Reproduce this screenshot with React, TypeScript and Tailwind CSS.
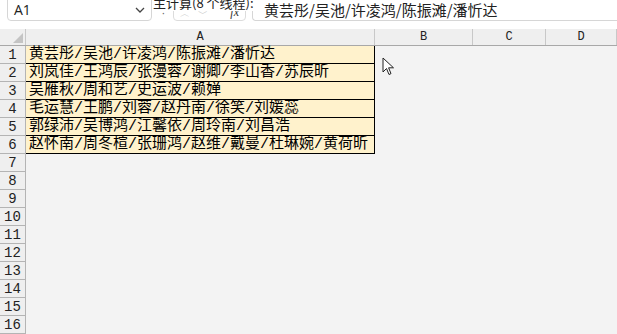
import React from "react";

const rows = [
  "黄芸彤/吴池/许凌鸿/陈振滩/潘忻达",
  "刘岚佳/王鸿辰/张漫蓉/谢卿/李山香/苏辰昕",
  "吴雁秋/周和艺/史运波/赖婵",
  "毛运慧/王鹏/刘蓉/赵丹南/徐笑/刘媛蕊",
  "郭绿沛/吴博鸿/江馨依/周玲南/刘昌浩",
  "赵怀南/周冬楦/张珊鸿/赵维/戴曼/杜琳婉/黄荷昕",
];

const cols = [
  { name: "A", w: "w-[349px]" },
  { name: "B", w: "w-[98px]" },
  { name: "C", w: "w-[73px]" },
  { name: "D", w: "w-[71px]" },
];

const mono = "font-['Liberation_Mono',monospace]";
const cjk = "font-['Liberation_Mono','Noto_Sans_CJK_SC',sans-serif]";

const App = () => {
  const numbers = Array.from({ length: 16 }, (_, i) => i + 1);

  return (
    <div className="relative w-[617px] h-[334px] overflow-hidden bg-[#f3f3f3]">
      {/* formula bar */}
      <div className="relative h-[29px] bg-white flex items-start">
        <div className="ml-[7px] -mt-[4px] w-[145px] h-[25px] border border-[#d6d6d6] rounded-[4px] flex items-end justify-between pb-[3px] px-[6px]">
          <span className="font-['Open_Sans',sans-serif] text-[14px] leading-none text-[#222]">A1</span>
          <svg width="10" height="7" viewBox="0 0 10 7" className="mb-[3px]">
            <path d="M1 1 L5 5 L9 1" stroke="#444" strokeWidth="1.3" fill="none" />
          </svg>
        </div>
        <div className="relative w-[100px] h-[22px]">
          <div className="absolute left-[21px] -top-[4px] w-[73px] h-[25px] border border-[#dcdcdc] rounded-[4px] flex items-end pb-[2px] px-[6px] gap-[8px]">
            <span className="text-[#c8c8c8] text-[10px] leading-none">︿</span>
            <span className="text-[#c8c8c8] text-[10px] leading-none">﹀</span>
            <span className="ml-auto font-['Liberation_Serif',serif] italic text-[12px] leading-none text-[#333]">fx</span>
          </div>
          <div className="absolute left-[1px] -top-[5px] bg-white pr-[2px] font-['Noto_Sans_CJK_SC',sans-serif] text-[13px] leading-[16px] text-[#222] whitespace-nowrap">
            主计算(8 个线程):
          </div>
          <span className="absolute left-[10px] top-[8px] text-[10px] leading-none text-[#666]">·</span>
        </div>
        <div className="-mt-[4px] flex-1 h-[25px] border border-[#d6d6d6] rounded-l-[4px] border-r-0 flex items-end pb-[3px] pl-[11px]">
          <span className="font-['Noto_Sans_CJK_SC',sans-serif] text-[15px] leading-none text-[#222] whitespace-nowrap">
            {rows[0]}
          </span>
        </div>
      </div>

      {/* column headers */}
      <div className="flex h-[17px] bg-[#efefef] border-b border-[#a8a8a8]">
        <div className="relative w-[26px] border-r border-[#c8c8c8]">
          <svg width="10" height="10" viewBox="0 0 10 10" className="absolute right-[2px] bottom-[2px]">
            <polygon points="10,0 10,10 0,10" fill="#c4c4c4" />
          </svg>
        </div>
        {cols.map((c) => (
          <div
            key={c.name}
            className={`${c.w} border-r border-[#c8c8c8] flex items-center justify-center ${mono} text-[12px] leading-none text-[#222]`}
          >
            {c.name}
          </div>
        ))}
      </div>

      {/* rows */}
      <div className="flex flex-col">
        {numbers.map((n) => (
          <div key={n} className="flex h-[18px]">
            <div
              className={`w-[26px] border-r border-b border-[#b4b4b4] bg-[#efefef] flex items-center justify-center ${mono} text-[14px] leading-none text-[#222]`}
            >
              {n}
            </div>
            {n <= 6 ? (
              <div
                className={`w-[349px] bg-[#fff2cc] border-b border-r border-black flex items-center pl-[3px] ${cjk} text-[15px] leading-none text-black whitespace-nowrap overflow-visible`}
              >
                {rows[n - 1]}
              </div>
            ) : null}
          </div>
        ))}
      </div>

      {/* mouse pointer */}
      <svg
        width="13"
        height="20"
        viewBox="0 0 13 20"
        className="absolute left-[382px] top-[57px]"
      >
        <path
          d="M1 1 L1 15 L4.5 11.5 L7 17.5 L9 16.6 L6.6 10.8 L11.5 10.8 Z"
          fill="white"
          stroke="#222"
          strokeWidth="1"
          strokeLinejoin="round"
        />
      </svg>
    </div>
  );
};

export default App;
